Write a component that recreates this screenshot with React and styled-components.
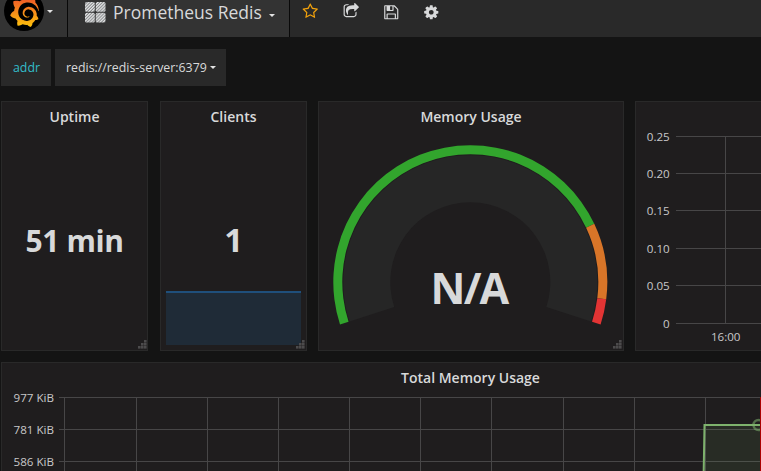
import React from "react";
import styled, { createGlobalStyle } from "styled-components";
import { SiGrafana } from "react-icons/si";

const GlobalStyle = createGlobalStyle`
  * { box-sizing: border-box; }
  body {
    margin: 0;
    background: #141414;
    color: #d8d9da;
    font-family: "Open Sans", Helvetica, Arial, sans-serif;
    font-size: 13px;
    overflow: hidden;
  }
  svg { display: block; }
`;

const Page = styled.div`
  height: 471px;
  width: 761px;
  overflow: hidden;
  background: #141414;
`;

const Navbar = styled.nav`
  display: flex;
  height: 37px;
  background: #292929;
`;

const Brand = styled.div`
  display: flex;
  width: 68px;
  padding-left: 4px;
  background: #333;
  border-right: 1px solid #090909;
`;

const Logo = styled.div`
  flex: none;
  width: 40px;
  height: 40px;
  margin-top: -9px;
  padding: 4.5px 0 0 4.5px;
  border-radius: 50%;
  background: #000;
`;

const Caret = styled.span`
  flex: none;
  width: 0;
  height: 0;
  margin: ${(p) => p.$margin};
  border: solid transparent;
  border-width: 3.5px 3.5px 0;
  border-top-color: #e3e3e3;
`;

const DashboardTitle = styled.div`
  display: flex;
  width: 222px;
  padding-left: 17px;
  background: #333;
  border-right: 1px solid #090909;
`;

const TitleText = styled.span`
  margin: -1px 0 0 7px;
  font-size: 17.5px;
  line-height: 27px;
  white-space: nowrap;
`;

const Actions = styled.div`
  display: flex;
  gap: 23.5px;
  padding: 3px 0 0 12px;
`;

const ActionIcon = styled.svg`
  margin: ${(p) => p.$nudge || "1px 0 0"};
`;

const GridIcon = styled.svg`
  flex: none;
  margin-top: 2px;
`;

const Variables = styled.div`
  display: flex;
  gap: 4px;
  padding: 12px 0 15px 1px;
`;

const Variable = styled.div`
  display: flex;
  align-items: center;
  width: ${(p) => p.$width};
  height: 37px;
  padding: 0 0 1px ${(p) => p.$pad};
  background: #292929;
  color: ${(p) => (p.$label ? "#33bdc9" : "#d8d9da")};
  font-size: 12.35px;
  white-space: nowrap;
`;

const Row = styled.div`
  display: grid;
  grid-template-columns: 147px 147px 306px 306px;
  column-gap: 11px;
  height: 250px;
  margin: 0 0 11px 1px;
`;

const PanelBox = styled.section`
  display: grid;
  grid-template: 29px 1fr / 1fr;
  position: relative;
  height: 250px;
  margin-left: ${(p) => p.$shift || "0"};
  margin-right: ${(p) => p.$overhang || "0"};
  background: #1f1d1e;
  border: 1px solid #292929;
`;

const PanelTitle = styled.h2`
  margin: 0;
  padding-top: 3px;
  color: #d8d9da;
  font-size: 14px;
  font-weight: 600;
  line-height: 23px;
  text-align: center;
`;

const Stat = styled.div`
  padding-top: ${(p) => p.$top};
  font-size: ${(p) => p.$size};
  font-weight: 690;
  letter-spacing: -0.4px;
  line-height: 44px;
  text-align: center;
  white-space: nowrap;
`;

const StatBody = styled.div`
  display: flex;
  flex-direction: column;
  justify-content: space-between;
`;

const Sparkline = styled.div`
  height: 54px;
  margin: 0 5px 5px;
  background: #1f2b37;
  border-top: 2px solid #1f4f7b;
`;

const ResizeHandle = styled.svg`
  position: absolute;
  right: ${(p) => p.$right || "1px"};
  bottom: 1px;
`;

const Chart = styled.svg`
  overflow: visible;
`;

const AxisText = styled.text`
  fill: #c8c8c9;
  font-family: "Open Sans", sans-serif;
  font-size: 11.6px;
`;

const GaugeText = styled.text`
  fill: #d8d9da;
  font-family: "Open Sans", sans-serif;
  font-size: 43px;
  font-weight: 690;
  letter-spacing: -1.8px;
`;

const FA = {
  star: "M1201 1004l306-297-422-62-189-382-189 382-422 62 306 297-73 421 378-199 377 199zm527-357q0 22-26 48l-363 354 86 500q1 7 1 20 0 50-41 50-19 0-40-12l-449-236-449 236q-22 12-40 12-21 0-31.5-14.5t-10.5-35.5q0-6 2-20l86-500-364-354q-25-27-25-48 0-37 56-46l502-73 225-455q19-41 49-41t49 41l225 455 502 73q56 9 56 46z",
  share: "M1472 989v259q0 119-84.5 203.5t-203.5 84.5h-832q-119 0-203.5-84.5t-84.5-203.5v-832q0-119 84.5-203.5t203.5-84.5h255q13 0 22.5 9.5t9.5 22.5q0 27-26 32-77 26-133 60-10 4-16 4h-112q-66 0-113 47t-47 113v832q0 66 47 113t113 47h832q66 0 113-47t47-113v-214q0-19 18-29 28-13 54-37 16-16 35-8 21 9 21 29zm237-496l-384 384q-18 19-45 19-12 0-25-5-39-17-39-59v-192h-160q-323 0-438 131-119 137-74 473 3 23-20 34-8 2-12 2-16 0-26-13-10-14-21-31t-39.5-68.5-49.5-99.5-38.5-114-17.5-122q0-49 3.5-91t14-90 28-88 47-81.5 68.5-74 94.5-61.5 124.5-48.5 159.5-30.5 196.5-11h160v-192q0-42 39-59 13-5 25-5 26 0 45 19l384 384q19 19 19 45t-19 45z",
  save: "M512 1536h768v-384h-768v384zm896 0h128v-896q0-14-10-38.5t-20-34.5l-281-281q-10-10-34-20t-39-10v416q0 40-28 68t-68 28h-576q-40 0-68-28t-28-68v-416h-128v1280h128v-416q0-40 28-68t68-28h832q40 0 68 28t28 68v416zm-384-928v-320q0-13-9.5-22.5t-22.5-9.5h-192q-13 0-22.5 9.5t-9.5 22.5v320q0 13 9.5 22.5t22.5 9.5h192q13 0 22.5-9.5t9.5-22.5zm640 32v928q0 40-28 68t-68 28h-1344q-40 0-68-28t-28-68v-1344q0-40 28-68t68-28h928q40 0 88 20t76 48l280 280q28 28 48 76t20 88z",
  cog: "M1152 896q0-106-75-181t-181-75-181 75-75 181 75 181 181 75 181-75 75-181zm512-109v222q0 12-8 23t-20 13l-185 28q-19 54-39 91 35 50 107 138 10 12 10 25t-9 23q-27 37-99 108t-94 71q-12 0-26-9l-138-108q-44 23-91 38-16 136-29 186-7 28-36 28h-222q-14 0-24.5-8.5t-11.5-21.5l-28-184q-49-16-90-37l-141 107q-10 9-25 9-14 0-25-11-126-114-165-168-7-10-7-23 0-12 8-23 15-21 51-66.5t54-70.5q-27-50-41-99l-183-27q-13-2-21-12.5t-8-23.5v-222q0-12 8-23t19-13l186-28q14-46 39-92-40-57-107-138-10-12-10-24 0-10 9-23 26-36 98.5-107.5t94.5-71.5q13 0 26 10l138 107q44-23 91-38 16-136 29-186 7-28 36-28h222q14 0 24.5 8.5t11.5 21.5l28 184q49 16 90 37l142-107q9-9 24-9 13 0 25 10 129 119 165 170 7 8 7 22 0 12-8 23-15 21-51 66.5t-54 70.5q26 50 41 98l183 28q13 2 21 12.5t8 23.5z",
};

function Icon({ name, nudge, size = 16.5, color = "#d8d9da" }) {
  return (
    <ActionIcon $nudge={nudge} width={size} height={size} viewBox="0 0 1792 1792" fill={color}>
      <path d={FA[name]} />
    </ActionIcon>
  );
}

function DashboardIcon() {
  const cells = [[0, 0], [10.7, 0], [0, 10.7], [10.7, 10.7]];
  return (
    <GridIcon width="21" height="21" viewBox="0 0 21 21">
      <defs>
        <pattern id="hatch" width="2.2" height="2.2" patternUnits="userSpaceOnUse" patternTransform="rotate(45)">
          <rect width="2.2" height="2.2" fill="#858789" />
          <rect width="1.2" height="2.2" fill="#e4e5e6" />
        </pattern>
      </defs>
      {cells.map(([x, y]) => (
        <rect key={`${x}-${y}`} x={x} y={y} width="9.8" height="9.8" rx="1.5" fill="url(#hatch)" />
      ))}
    </GridIcon>
  );
}

function Handle({ right }) {
  const dots = [[6, 0], [3, 3], [6, 3], [0, 6], [3, 6], [6, 6]];
  return (
    <ResizeHandle $right={right} width="9" height="9">
      {dots.map(([x, y]) => (
        <rect key={`${x}-${y}`} x={x} y={y} width="2.6" height="2.6" fill="#4c4b4c" />
      ))}
    </ResizeHandle>
  );
}

const GAUGE = { cx: 151.3, cy: 151.2, start: -198 };

// Annular sector between two fractions of the gauge's 216 degree sweep.
function sector(from, to, inner, outer) {
  const point = (f, r) => {
    const a = ((GAUGE.start + f * 216) * Math.PI) / 180;
    return `${GAUGE.cx + r * Math.cos(a)} ${GAUGE.cy + r * Math.sin(a)}`;
  };
  const large = (to - from) * 216 > 180 ? 1 : 0;
  return `M${point(from, outer)}A${outer} ${outer} 0 ${large} 1 ${point(to, outer)}L${point(to, inner)}A${inner} ${inner} 0 ${large} 0 ${point(from, inner)}Z`;
}

function Gauge() {
  return (
    <Chart width="304" height="219" viewBox="0 0 304 219">
      <path d={sector(0, 1, 80, 127)} fill="#262626" />
      <path d={sector(0, 0.8, 128, 137)} fill="#32a52d" />
      <path d={sector(0.8, 0.95, 128, 137)} fill="#d87528" />
      <path d={sector(0.95, 1, 128, 137)} fill="#e23434" />
      <GaugeText x="150" y="173" textAnchor="middle">N/A</GaugeText>
    </Chart>
  );
}

function NetworkChart() {
  const ticks = [["0.25", 5.5], ["0.20", 42.5], ["0.15", 79.5], ["0.10", 117.5], ["0.05", 154.5], ["0", 192.5]];
  return (
    <Chart width="304" height="219">
      {ticks.map(([label, y]) => (
        <g key={label}>
          <path d={`M40 ${y}H304`} stroke="#474647" />
          <AxisText x="33.7" y={y + 4.5} textAnchor="end">{label}</AxisText>
        </g>
      ))}
      <path d="M89.5 5V193" stroke="#474647" />
      <AxisText x="89.7" y="210" textAnchor="middle">16:00</AxisText>
    </Chart>
  );
}

function MemoryChart() {
  const ticks = [["977 KiB", 5.5], ["781 KiB", 37.5], ["586 KiB", 69.5]];
  const columns = [62.5, 134.5, 205.5, 276.5, 347.5, 418.5, 489.5, 561.5, 632.5, 703.5];
  return (
    <Chart width="936" height="90">
      {ticks.map(([label, y]) => (
        <g key={label}>
          <path d={`M57 ${y}H936`} stroke="#474647" />
          <AxisText x="52" y={y + 4.5} textAnchor="end">{label}</AxisText>
        </g>
      ))}
      {columns.map((x) => <path key={x} d={`M${x} 5V90`} stroke="#474647" />)}
      <path d="M701.5 90L702.5 33H759V90Z" fill="#7eb26d" fillOpacity=".1" />
      <path d="M701.5 90L702.5 33H759" fill="none" stroke="#7eb26d" strokeWidth="2" />
      <circle cx="756.5" cy="33" r="5" fill="none" stroke="#7eb26d" strokeOpacity=".55" strokeWidth="2.5" />
      <path d="M758.5 5V90" stroke="#aa0000" />
    </Chart>
  );
}

function Panel({ title, children, handleRight, noHandle, ...box }) {
  return (
    <PanelBox {...box}>
      <PanelTitle>{title}</PanelTitle>
      {children}
      {!noHandle && <Handle right={handleRight} />}
    </PanelBox>
  );
}

export default function App() {
  return (
    <Page>
      <GlobalStyle />
      <Navbar>
        <Brand>
          <Logo>
            <svg width="0" height="0">
              <defs>
                <linearGradient id="flame" gradientUnits="userSpaceOnUse" x1="12" y1="24" x2="12" y2="2">
                  <stop offset="0" stopColor="#fcc20b" />
                  <stop offset="1" stopColor="#f05a28" />
                </linearGradient>
              </defs>
            </svg>
            <SiGrafana size={31} fill="url(#flame)" color="#f68d1f" />
          </Logo>
          <Caret $margin="10px 0 0 3px" />
        </Brand>
        <DashboardTitle>
          <DashboardIcon />
          <TitleText>Prometheus Redis</TitleText>
          <Caret $margin="14px 0 0 7px" />
        </DashboardTitle>
        <Actions>
          <Icon name="star" color="#f2a20c" nudge="0" />
          <Icon name="share" nudge="0 0 0 1px" />
          <Icon name="save" />
          <Icon name="cog" />
        </Actions>
      </Navbar>
      <Variables>
        <Variable $label $width="50px" $pad="12px">addr</Variable>
        <Variable $width="171px" $pad="11px">
          redis://redis-server:6379
          <Caret $margin="1px 0 0 3px" />
        </Variable>
      </Variables>
      <Row>
        <Panel title="Uptime" handleRight="0">
          <Stat $top="88px" $size="30px">51 min</Stat>
        </Panel>
        <Panel title="Clients" $shift="1px" $overhang="-1px">
          <StatBody>
            <Stat $top="87px" $size="33px">1</Stat>
            <Sparkline />
          </StatBody>
        </Panel>
        <Panel title="Memory Usage" $shift="1px" $overhang="-1px"><Gauge /></Panel>
        <Panel title="" $shift="1px" $overhang="-1px"><NetworkChart /></Panel>
      </Row>
      <Row>
        <Panel title="Total Memory Usage" $overhang="-792px" noHandle>
          <MemoryChart />
        </Panel>
      </Row>
    </Page>
  );
}
